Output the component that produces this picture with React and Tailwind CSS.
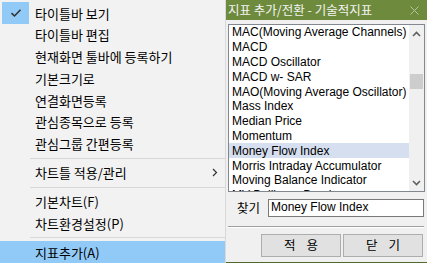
import React from "react";

const KR = { fontFamily: '"Noto Sans CJK KR", "Liberation Sans", sans-serif' };
const LS = { fontFamily: '"Liberation Sans", "Noto Sans CJK KR", sans-serif' };

function Item({ label, checked, active, sub }) {
  return (
    <div className={`flex items-center h-[22px] relative ${active ? "bg-[#91c9f7]" : ""}`}>
      <div className="w-[35px] h-full flex items-center pl-[2px]">
        {checked && (
          <div className="w-[27px] h-[22px] bg-[#91c9f7] flex items-center justify-center">
            <svg width="12" height="10" viewBox="0 0 12 10">
              <path d="M1.5 5.2 L4.5 8 L10.5 1.8" fill="none" stroke="#333" strokeWidth="1.6" />
            </svg>
          </div>
        )}
      </div>
      <span className="text-[13px] text-black leading-none" style={KR}>{label}</span>
      {sub && (
        <svg className="absolute left-[212px] top-[7px]" width="6" height="9" viewBox="0 0 6 9">
          <path d="M1 1 L4.5 4.5 L1 8" fill="none" stroke="#333" strokeWidth="1.2" />
        </svg>
      )}
    </div>
  );
}

function Sep({ h, top }) {
  return (
    <div className={`${h} relative`}>
      <div className={`absolute left-[30px] right-0 ${top} h-px bg-[#d7d7d7]`} />
    </div>
  );
}

const rows = [
  "MAC(Moving Average Channels)",
  "MACD",
  "MACD Oscillator",
  "MACD w- SAR",
  "MAO(Moving Average Oscillator)",
  "Mass Index",
  "Median Price",
  "Momentum",
  "Money Flow Index",
  "Morris Intraday Accumulator",
  "Moving Balance Indicator",
  "MV Bollinger Band",
];

export default function App() {
  return (
    <div className="w-[427px] h-[263px] overflow-hidden flex bg-[#f0f0f0]">
      {/* context menu */}
      <div className="w-[226px] h-full bg-[#f2f2f2] border-r border-[#d9d9d9] pt-[2px] flex flex-col shrink-0">
        <Item label="타이틀바 보기" checked />
        <Item label="타이틀바 편집" />
        <Item label="현재화면 툴바에 등록하기" />
        <Item label="기본크기로" />
        <Item label="연결화면등록" />
        <Item label="관심종목으로 등록" />
        <Item label="관심그룹 간편등록" />
        <Sep h="h-[7px]" top="top-[4px]" />
        <Item label="차트틀 적용/관리" sub />
        <Sep h="h-[8px]" top="top-[4px]" />
        <Item label="기본차트(F)" />
        <Item label="차트환경설정(P)" />
        <Sep h="h-[7px]" top="top-[3px]" />
        <Item label="지표추가(A)" active />
      </div>

      {/* dialog */}
      <div className="flex-1 h-full flex flex-col bg-[#f0f0f0] border-b border-[#4f6a2a]">
        <div className="h-[20px] bg-[#6e8b3d] flex items-center justify-between pl-[2px] pr-[8px] shrink-0">
          <span className="text-[12.5px] text-[#f4f4f4] leading-none" style={KR}>지표 추가/전환 - 기술적지표</span>
          <svg width="9" height="9" viewBox="0 0 9 9">
            <path d="M0.5 0.5 L8.5 8.5 M8.5 0.5 L0.5 8.5" stroke="#b7c79c" strokeWidth="1" />
          </svg>
        </div>
        <div className="flex-1 flex flex-col pl-[2px] pt-[4px]">
          {/* list box */}
          <div className="w-[197px] h-[168px] border border-[#828790] bg-white flex overflow-hidden">
            <div className="flex-1 flex flex-col overflow-hidden">
              {rows.map((r, i) => (
                <div
                  key={r}
                  className={`h-[14.8px] shrink-0 flex items-center pl-[3px] text-[12px] text-black leading-none whitespace-nowrap ${
                    i === 8 ? "bg-[#d6dff0]" : ""
                  }`}
                  style={LS}
                >
                  {r}
                </div>
              ))}
            </div>
            <div className="w-[15px] h-full bg-[#f0f0f0] relative">
              <svg className="absolute top-[6px] left-[3px]" width="9" height="6" viewBox="0 0 9 6">
                <path d="M1 5 L4.5 1.5 L8 5" fill="none" stroke="#606060" strokeWidth="1.6" />
              </svg>
              <div className="absolute left-[1px] top-[49px] w-[13px] h-[15px] bg-[#cdcdcd]" />
              <svg className="absolute bottom-[5px] left-[3px]" width="9" height="6" viewBox="0 0 9 6">
                <path d="M1 1 L4.5 4.5 L8 1" fill="none" stroke="#606060" strokeWidth="1.6" />
              </svg>
            </div>
          </div>

          {/* find row */}
          <div className="flex items-center mt-[7px] h-[18px]">
            <span className="ml-[9px] w-[31px] text-[12.5px] text-black leading-none" style={KR}>찾기</span>
            <div className="w-[156px] h-[18px] border border-[#7a7a7a] bg-white flex items-center pl-[2px] pb-[2px]">
              <span className="text-[12px] text-black leading-none" style={LS}>Money Flow Index</span>
            </div>
          </div>

          {/* etched separator */}
          <div className="mt-[9px] w-[196px]">
            <div className="h-px bg-[#a0a0a0]" />
            <div className="h-px bg-white" />
          </div>

          {/* buttons */}
          <div className="flex mt-[6px] ml-[33px] gap-[2px]">
            <div className="w-[80px] h-[23px] border border-[#adadad] bg-[#e1e1e1] flex items-center justify-center">
              <span className="text-[12.5px] text-black leading-none [word-spacing:8px]" style={KR}>적 용</span>
            </div>
            <div className="w-[80px] h-[23px] border border-[#adadad] bg-[#e1e1e1] flex items-center justify-center">
              <span className="text-[12.5px] text-black leading-none [word-spacing:8px]" style={KR}>닫 기</span>
            </div>
          </div>
        </div>
      </div>
    </div>
  );
}
